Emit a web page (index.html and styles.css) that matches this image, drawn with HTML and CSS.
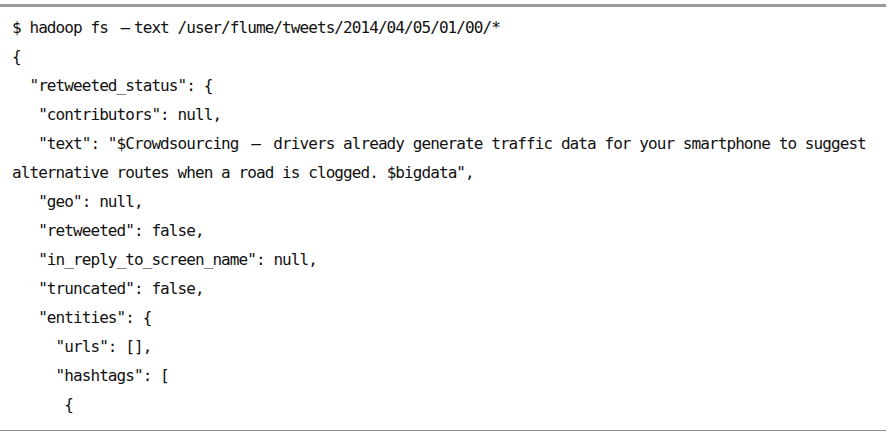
FILE: index.html
```html
<!DOCTYPE html>
<html>
<head>
<meta charset="utf-8">
<link rel="stylesheet" href="styles.css">
</head>
<body>
<div class="code-box">
<pre class="code">$ hadoop fs <span class="wide">–</span>text /user/flume/tweets/2014/04/05/01/00/*
{
  "retweeted_status": {
   "contributors": null,
   "text": "$Crowdsourcing <span class="wide">–</span> drivers already generate traffic data for your smartphone to suggest
alternative routes when a road is clogged. $bigdata",
   "geo": null,
   "retweeted": false,
   "in_reply_to_screen_name": null,
   "truncated": false,
   "entities": {
     "urls": [],
     "hashtags": [
      {</pre>
</div>
</body>
</html>
```
FILE: styles.css
```css
html, body {
  margin: 0;
  padding: 0;
  background: #ffffff;
}

.code-box {
  margin: 4px 2px 0 0;
  border-top: 3px solid #9c9a9e;
  border-bottom: 1px solid #8e8c90;
  padding: 6px 0 11px 12px;
}

.code {
  margin: 0;
  font-family: "DejaVu Sans Mono", "Liberation Mono", monospace;
  font-size: 16px;
  letter-spacing: -0.92px;
  line-height: 29px;
  color: #111111;
  white-space: pre;
}

.wide {
  display: inline-block;
  width: 17.4px;
  text-align: center;
  letter-spacing: 0;
}
```
